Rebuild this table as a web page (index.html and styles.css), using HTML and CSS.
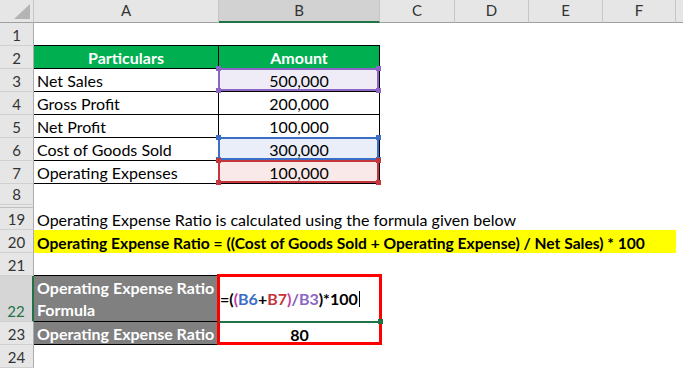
FILE: index.html
```html
<!DOCTYPE html>
<html>
<head>
<meta charset="utf-8">
<title>Operating Expense Ratio</title>
<link rel="stylesheet" href="styles.css">
</head>
<body>
<div class="sheet">
  <div class="row row-head">
    <div class="corner"><svg width="16" height="15" viewBox="0 0 16 15"><polygon points="16,0 16,15 0,15" fill="#b4b4b4"/></svg></div>
    <div class="colh">A</div>
    <div class="colh colh-sel">B</div>
    <div class="colh">C</div>
    <div class="colh">D</div>
    <div class="colh">E</div>
    <div class="colh">F</div>
    <div class="colh colh-last"></div>
  </div>
  <div class="row"><div class="rowh">1</div></div>
  <div class="row">
    <div class="rowh">2</div>
    <div class="cell td th">Particulars</div>
    <div class="cell td th">Amount</div>
  </div>
  <div class="row">
    <div class="rowh">3</div>
    <div class="cell td">Net Sales</div>
    <div class="cell td num hl hl-purple">500,000</div>
  </div>
  <div class="row">
    <div class="rowh">4</div>
    <div class="cell td">Gross Profit</div>
    <div class="cell td num">200,000</div>
  </div>
  <div class="row">
    <div class="rowh">5</div>
    <div class="cell td">Net Profit</div>
    <div class="cell td num">100,000</div>
  </div>
  <div class="row">
    <div class="rowh">6</div>
    <div class="cell td">Cost of Goods Sold</div>
    <div class="cell td num hl hl-blue">300,000</div>
  </div>
  <div class="row">
    <div class="rowh">7</div>
    <div class="cell td">Operating Expenses</div>
    <div class="cell td num hl hl-red">100,000</div>
  </div>
  <div class="row row-8"><div class="rowh">8</div></div>
  <div class="row row-hidden"><div class="rowh"></div></div>
  <div class="row row-19">
    <div class="rowh">19</div>
    <div class="cell wide">Operating Expense Ratio is calculated using the formula given below</div>
  </div>
  <div class="row">
    <div class="rowh">20</div>
    <div class="cell wide yellow">Operating Expense Ratio = ((Cost of Goods Sold + Operating Expense) / Net Sales) * 100</div>
  </div>
  <div class="row"><div class="rowh">21</div></div>
  <div class="row row-22">
    <div class="rowh rowh-sel">22</div>
    <div class="cell grey grey-top">Operating Expense Ratio<br>Formula</div>
    <div class="cell formula"><span>=(</span><span class="paren">(</span><span class="ref-blue">B6</span><span>+</span><span class="ref-red">B7</span><span class="paren">)</span><span class="slash">/</span><span class="ref-purple">B3</span><span>)*100</span><span class="caret"></span></div>
  </div>
  <div class="row">
    <div class="rowh">23</div>
    <div class="cell grey">Operating Expense Ratio</div>
    <div class="cell result">80</div>
  </div>
  <div class="row"><div class="rowh">24</div></div>
</div>
</body>
</html>
```
FILE: styles.css
```css
* { box-sizing: border-box; }
html, body { margin: 0; padding: 0; background: #fff; }
body {
  width: 683px;
  height: 368px;
  overflow: hidden;
  font-family: Lato, "Liberation Sans", sans-serif;
  font-size: 16px;
  color: #000;
}
.sheet { display: flex; flex-direction: column; }
.row {
  display: grid;
  grid-template-columns: 34px 185px 161px 75px 74px 74px 73px 1fr;
  height: 23px;
}
.row-8 { height: 21px; }
.row-hidden { height: 3px; }
.row-19 { height: 22px; }
.row-22 { height: 46px; }

/* headers */
.corner {
  background: #e6e6e6;
  border-right: 1px solid #c6c6c6;
  border-bottom: 1px solid #a0a0a0;
  display: flex;
  align-items: flex-end;
  justify-content: flex-end;
  padding: 0 3px 3px 0;
}
.corner svg { display: block; }
.colh {
  background: #e6e6e6;
  border-right: 1px solid #c6c6c6;
  border-bottom: 1px solid #a0a0a0;
  color: #333;
  text-align: center;
  line-height: 21px;
  font-size: 15px;
}
.colh-sel {
  background: #d2d2d2;
  border-bottom: 2px solid #217346;
}
.colh-last { border-right: none; }
.rowh {
  background: #e6e6e6;
  border-right: 1px solid #ababab;
  border-bottom: 1px solid #d0d0d0;
  color: #333;
  display: flex;
  align-items: flex-end;
  justify-content: center;
  line-height: 18px;
  padding-bottom: 1px;
  font-size: 15px;
}
.row-hidden .rowh { border-bottom-color: #c0c0c0; }
.rowh-sel {
  background: #d6d6d6;
  color: #217346;
  border-right: 2px solid #217346;
}

/* cells */
.cell {
  display: flex;
  align-items: flex-end;
  line-height: 18px;
  padding: 0 3px 1px 3px;
  white-space: nowrap;
}
.td {
  border-right: 1px solid #000;
  border-bottom: 1px solid #000;
}
.th {
  background: #00b050;
  color: #fff;
  font-weight: 700;
  justify-content: center;
  box-shadow: 0 -1px 0 #000;
}
.num { justify-content: center; }
.wide { grid-column: 2 / 8; }
.yellow { background: #ffff00; font-weight: 700; font-size: 15.6px; }

/* reference highlights */
.hl { position: relative; }
.hl::before {
  content: "";
  position: absolute;
  top: -1px; left: -1px; right: 0; bottom: 0;
  border: 2px solid var(--hc);
}
.hl::after {
  content: "";
  position: absolute;
  top: -3px; left: -3px; right: -2px; bottom: -2px;
  z-index: 1;
  background:
    linear-gradient(var(--hc), var(--hc)) left top / 5px 5px no-repeat,
    linear-gradient(var(--hc), var(--hc)) right top / 5px 5px no-repeat,
    linear-gradient(var(--hc), var(--hc)) left bottom / 5px 5px no-repeat,
    linear-gradient(var(--hc), var(--hc)) right bottom / 5px 5px no-repeat;
}
.hl-purple { --hc: #8c66c4; background: #efecf7; }
.hl-blue { --hc: #3b6fc6; background: #e9eef8; }
.hl-red { --hc: #c4353c; background: #f9e9e9; }

/* result block */
.grey {
  background: #808080;
  color: #fff;
  font-weight: 700;
  border-right: 1px solid #000;
  border-bottom: 1px solid #000;
}
.grey-top {
  box-shadow: 0 -1px 0 #000;
  flex-direction: column;
  align-items: flex-start;
  justify-content: flex-end;
  line-height: 22px;
  padding-bottom: 0;
}
.formula {
  position: relative;
  align-items: flex-start;
  padding: 14px 0 0 1px;
  font-weight: 700;
}
.formula::before {
  content: "";
  position: absolute;
  top: -2px; left: -2px; right: -2px; bottom: -23px;
  border: 3px solid #ff0000;
  z-index: 3;
}
.formula::after {
  content: "";
  position: absolute;
  left: 0; right: -3px; bottom: -2px;
  height: 5px;
  z-index: 4;
  background:
    linear-gradient(#217346, #217346) right center / 5px 5px no-repeat,
    linear-gradient(#217346, #217346) left center / calc(100% - 3px) 2px no-repeat;
}
.paren { color: #c0409a; }
.slash { color: #7c58b8; }
.ref-blue { color: #3b6fc6; }
.ref-red { color: #c4353c; }
.ref-purple { color: #8c66c4; }
.caret {
  display: inline-block;
  width: 1px;
  height: 16px;
  background: #000;
  margin-top: 1px;
  margin-left: 1px;
}
.result {
  justify-content: center;
  font-weight: 700;
}
```
